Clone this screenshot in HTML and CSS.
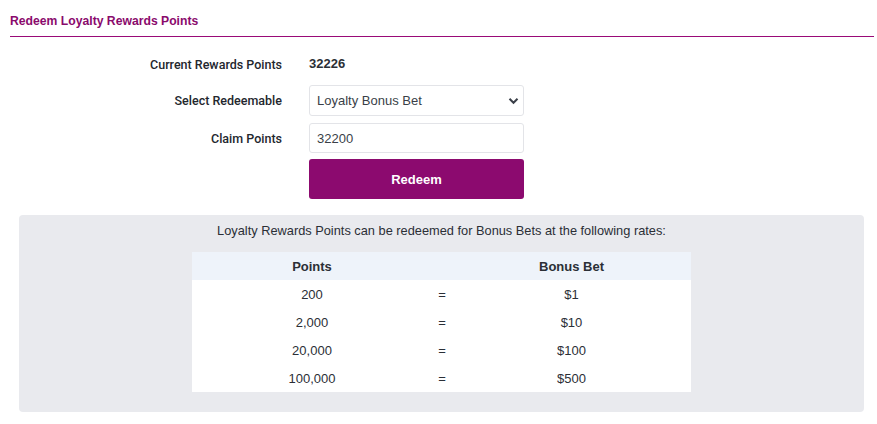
FILE: index.html
```html
<!DOCTYPE html>
<html>
<head>
<meta charset="utf-8">
<link rel="stylesheet" href="styles.css">
</head>
<body>
<div class="page">
  <h2 class="title">Redeem Loyalty Rewards Points</h2>
  <form class="form">
    <div class="row">
      <label class="label">Current Rewards Points</label>
      <div class="value points">32226</div>
    </div>
    <div class="row">
      <label class="label">Select Redeemable</label>
      <div class="value">
        <div class="select">
          <span>Loyalty Bonus Bet</span>
          <svg class="chev" width="11" height="8" viewBox="0 0 11 8"><path d="M1.5 1.8 L5.5 5.8 L9.5 1.8" fill="none" stroke="#3a3f48" stroke-width="2"/></svg>
        </div>
      </div>
    </div>
    <div class="row">
      <label class="label">Claim Points</label>
      <div class="value"><div class="input">32200</div></div>
    </div>
    <div class="row">
      <div class="label"></div>
      <div class="value"><button type="button" class="btn">Redeem</button></div>
    </div>
  </form>
  <div class="info">
    <p class="intro">Loyalty Rewards Points can be redeemed for Bonus Bets at the following rates:</p>
    <table class="rates">
      <thead>
        <tr><th class="c1">Points</th><th class="c2"></th><th class="c3">Bonus Bet</th></tr>
      </thead>
      <tbody>
        <tr><td>200</td><td>=</td><td>$1</td></tr>
        <tr><td>2,000</td><td>=</td><td>$10</td></tr>
        <tr><td>20,000</td><td>=</td><td>$100</td></tr>
        <tr><td>100,000</td><td>=</td><td>$500</td></tr>
      </tbody>
    </table>
  </div>
</div>
</body>
</html>
```
FILE: styles.css
```css
* { box-sizing: border-box; }
html, body { margin: 0; padding: 0; background: #fff; }
body { font-family: "Liberation Sans", Arial, sans-serif; color: #2b2f36; }
.page { padding: 13px 3px 0 10px; }
.title {
  margin: 0;
  font-size: 12.2px;
  font-weight: bold;
  color: #8a0a6c;
  padding-bottom: 7px;
  border-bottom: 1px solid #9a0a78;
  line-height: 16px;
}
.form { padding-top: 19px; display: flex; flex-direction: column; }
.row { display: flex; align-items: center; }
.label {
  width: 272px;
  text-align: right;
  font-family: Roboto, "Liberation Sans", sans-serif;
  font-size: 12.5px;
  font-weight: 500;
  color: #23272e;
}
.value { margin-left: 27px; width: 215px; }
.points { font-weight: bold; font-size: 13px; line-height: 16px; color: #2b2f36; }
.row:nth-child(1) { height: 16px; margin-bottom: 13px; }
.select, .input {
  height: 31px;
  border: 1px solid #e3e4e8;
  border-radius: 3px;
  background: #fff;
  font-size: 13px;
  color: #3a3f48;
  padding: 0 4px 0 7px;
  display: flex;
  align-items: center;
}
.select { justify-content: space-between; }
.row:nth-child(2) { margin-bottom: 7px; }
.row:nth-child(3) { margin-bottom: 6px; }
.input { height: 30px; }
.btn {
  width: 215px;
  height: 40px;
  border: none;
  border-radius: 3px;
  background: #8c0a6f;
  color: #fff;
  font-family: inherit;
  font-size: 13px;
  font-weight: bold;
}
.info {
  margin: 16px 10px 0 9px;
  background: #e9eaee;
  border-radius: 4px;
  padding: 8px 0 20px;
  height: 197px;
}
.intro {
  margin: 0 0 13px;
  text-align: center;
  font-size: 12.8px;
  line-height: 16px;
  color: #2b2f36;
}
.rates {
  margin: 0 auto;
  width: 499px;
  border-collapse: collapse;
  background: #fff;
  font-size: 13px;
  color: #2b2f36;
}
.rates th {
  background: #eef3fa;
  height: 28px;
  font-weight: bold;
  padding: 0;
}
.rates td { height: 28px; text-align: center; padding: 0; }
.c1 { width: 240px; }
.c2 { width: 20px; }
.c3 { width: 239px; }
```
